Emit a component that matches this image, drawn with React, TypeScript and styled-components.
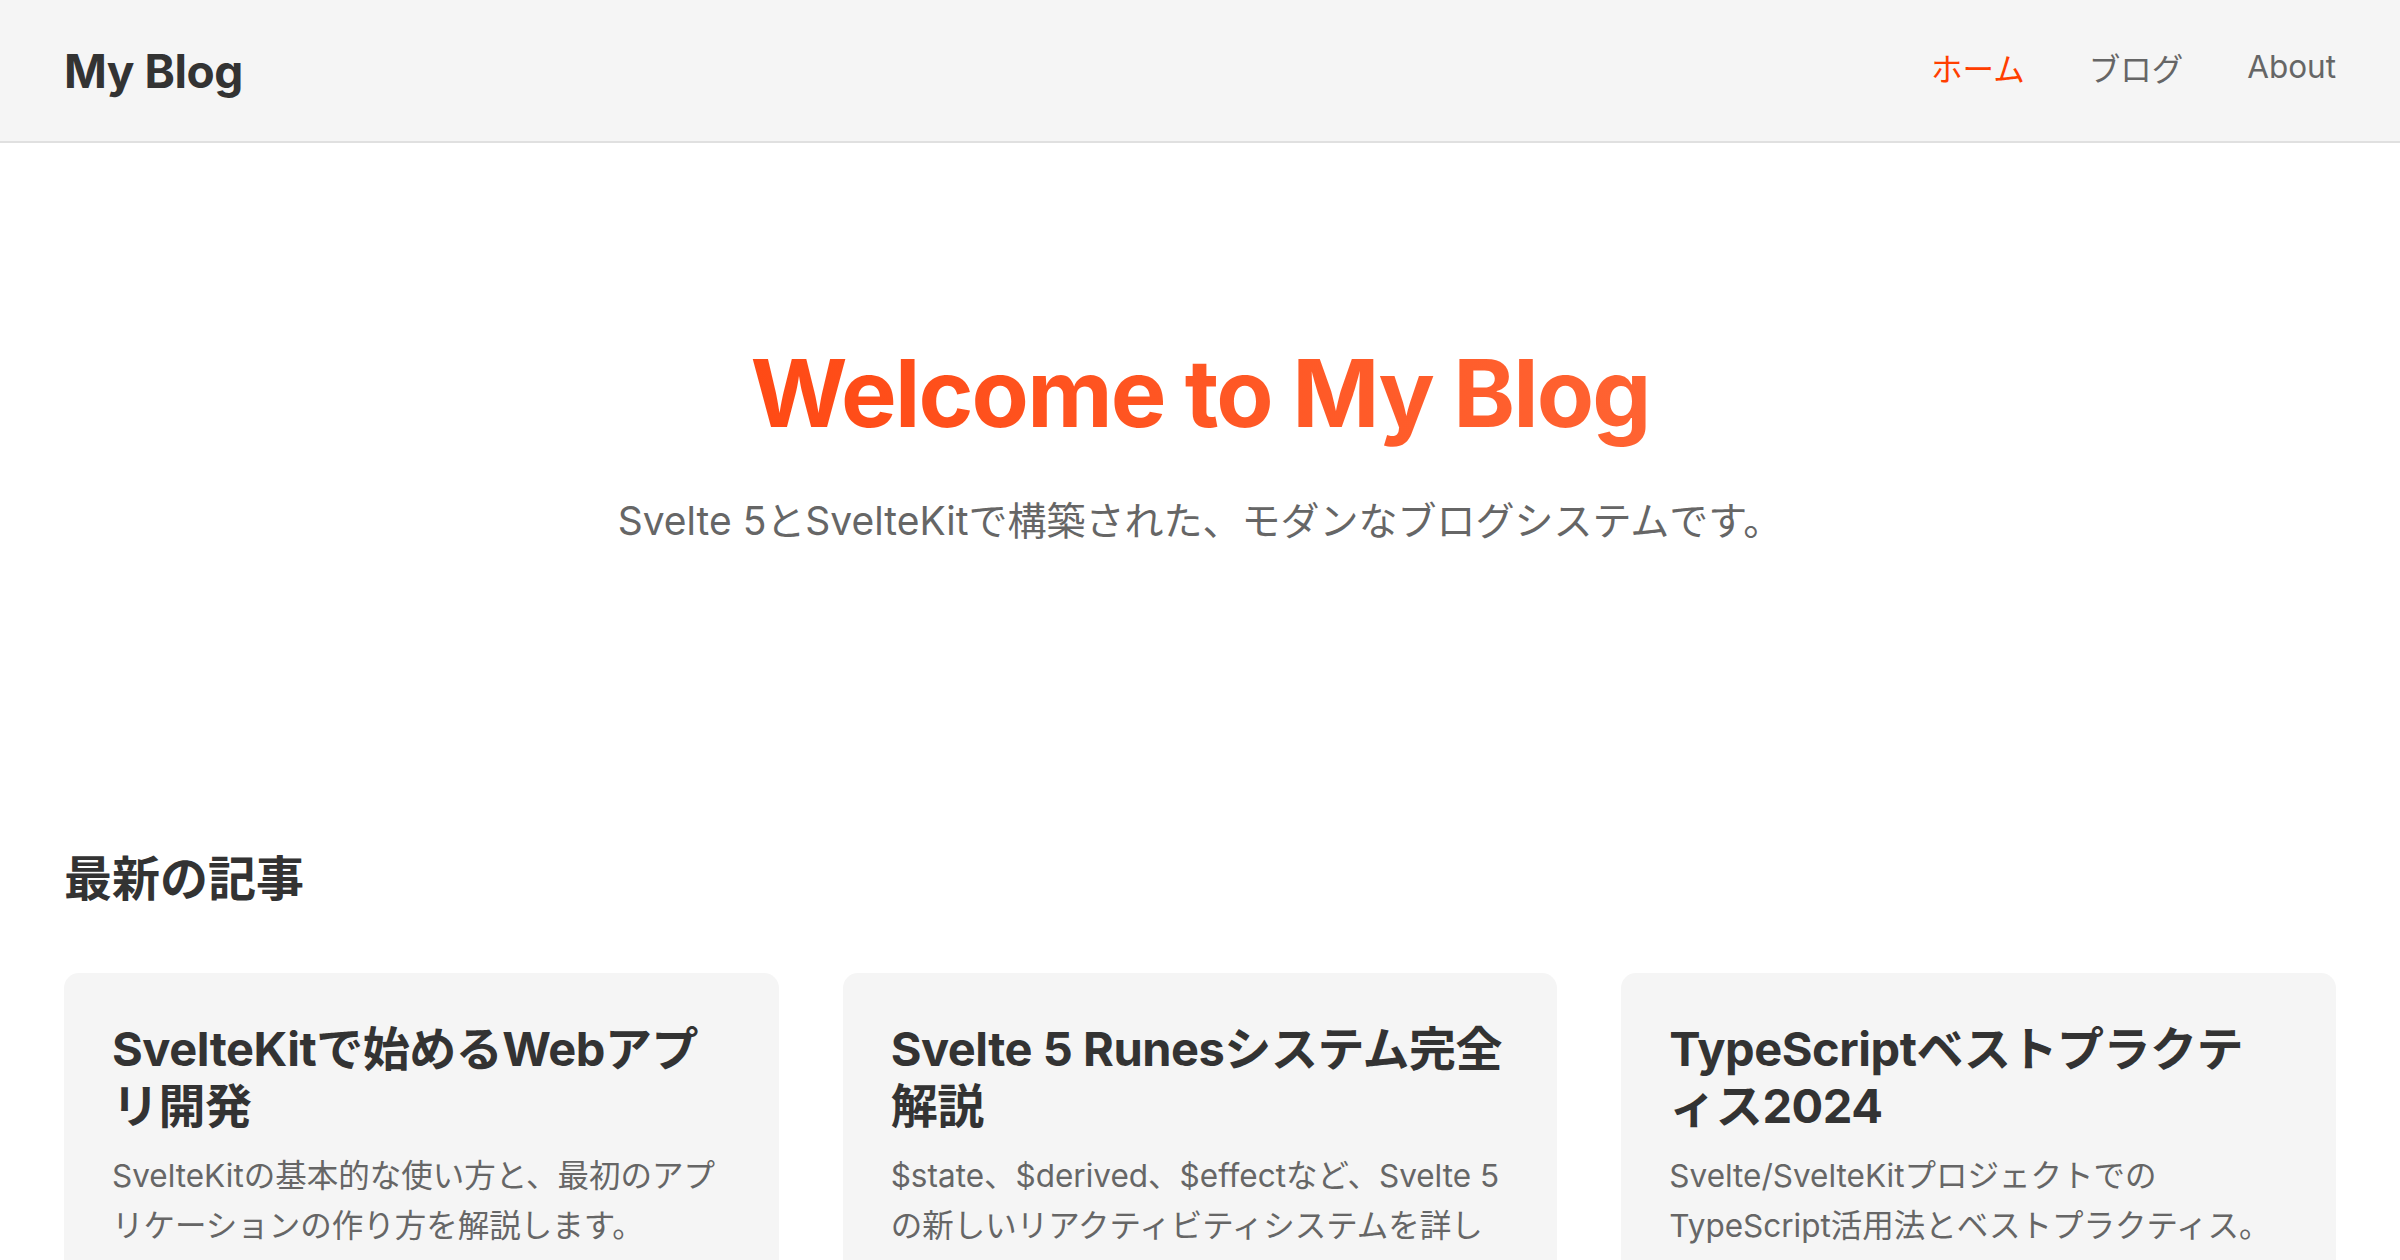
import React from "react";
import styled, { createGlobalStyle } from "styled-components";

const GlobalStyle = createGlobalStyle`
  * {
    box-sizing: border-box;
  }
  body {
    margin: 0;
    background: #ffffff;
    font-family: Inter, "Noto Sans CJK JP", sans-serif;
    color: #333333;
  }
`;

type Post = {
  slug: string;
  title: string;
  description: string;
};

// the third title breaks before the small kana, as in the original layout
const posts: Post[] = [
  {
    slug: "sveltekit-intro",
    title: "SvelteKitで始めるWebアプリ開発",
    description: "SvelteKitの基本的な使い方と、最初のアプリケーションの作り方を解説します。",
  },
  {
    slug: "svelte5-runes",
    title: "Svelte 5 Runesシステム完全解説",
    description: "$state、$derived、$effectなど、Svelte 5の新しいリアクティビティシステムを詳しく解説します。",
  },
  {
    slug: "typescript-best-practices",
    title: "TypeScriptベストプラクテ\nィス2024",
    description: "Svelte/SvelteKitプロジェクトでのTypeScript活用法とベストプラクティス。",
  },
];

const App: React.FC = () => {
  return (
    <>
      <GlobalStyle />
      <Header>
        <Logo href="#">My Blog</Logo>
        <Nav>
          <NavLink href="#" $active>
            ホーム
          </NavLink>
          <NavLink href="#">ブログ</NavLink>
          <NavLink href="#">About</NavLink>
        </Nav>
      </Header>
      <Main>
        <Hero>
          <HeroTitle>Welcome to My Blog</HeroTitle>
          <HeroText>Svelte 5とSvelteKitで構築された、モダンなブログシステムです。</HeroText>
        </Hero>
        <Section>
          <SectionTitle>最新の記事</SectionTitle>
          <Grid>
            {posts.map((post) => (
              <Card key={post.slug}>
                <CardTitle>{post.title}</CardTitle>
                <CardText>{post.description}</CardText>
              </Card>
            ))}
          </Grid>
        </Section>
      </Main>
    </>
  );
};

const Header = styled.header`
  display: flex;
  align-items: center;
  justify-content: space-between;
  height: 143px;
  padding: 0 64px;
  background-color: #f5f5f5;
  border-bottom: 2px solid #e0e0e0;
`;

const Logo = styled.a`
  font-size: 46px;
  font-weight: 700;
  letter-spacing: -0.01em;
  color: #333333;
  text-decoration: none;
  margin-top: 1px;
`;

const Nav = styled.nav`
  display: flex;
  align-items: center;
  gap: 64px;
  margin-bottom: 8px;
`;

const NavLink = styled.a<{ $active?: boolean }>`
  font-size: 31.5px;
  color: ${({ $active }) => ($active ? "#ff3e00" : "#666666")};
  text-decoration: none;
`;

const Main = styled.main`
  padding: 0 64px;
`;

const Hero = styled.section`
  display: flex;
  flex-direction: column;
  align-items: center;
  text-align: center;
  padding: 194px 0 0;
`;

const HeroTitle = styled.h1`
  margin: 0 0 41px;
  font-size: 93.6px;
  line-height: 1.2;
  font-weight: 700;
  letter-spacing: -0.02em;
  background: linear-gradient(90deg, #ff4a15 0%, #ff6332 100%);
  -webkit-background-clip: text;
  background-clip: text;
  color: transparent;
`;

const HeroText = styled.p`
  margin: 0;
  font-size: 39px;
  line-height: 1.6;
  color: #666666;
`;

const Section = styled.section`
  padding-top: 297px;
`;

const SectionTitle = styled.h2`
  margin: 0 0 66px;
  font-size: 48px;
  line-height: 1.2;
  font-weight: 700;
  color: #333333;
`;

const Grid = styled.div`
  display: grid;
  grid-template-columns: repeat(3, 1fr);
  gap: 64px;
`;

const Card = styled.article`
  background-color: #f5f5f5;
  border-radius: 15px;
  padding: 48px;
`;

const CardTitle = styled.h3`
  margin: 0 0 16px;
  font-size: 47px;
  line-height: 1.21;
  font-weight: 700;
  letter-spacing: -0.01em;
  white-space: pre-line;
  color: #333333;
`;

const CardText = styled.p`
  margin: 0;
  font-size: 31.5px;
  line-height: 1.6;
  color: #666666;
`;

export default App;
